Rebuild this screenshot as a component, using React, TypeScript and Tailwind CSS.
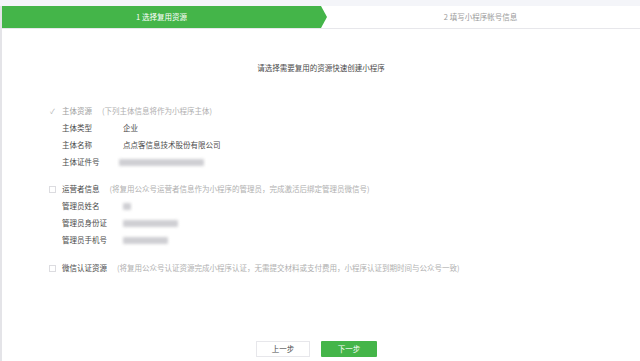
const font = { fontFamily: '"Noto Sans CJK SC", "Noto Sans", sans-serif' };

function Blur({ w }: { w: number }) {
  return (
    <div
      className="h-[7px] rounded-[1px] bg-[#cfcfd3] blur-[1.5px]"
      style={{ width: w }}
    />
  );
}

function Row({ label, children }: { label: string; children: React.ReactNode }) {
  return (
    <div className="flex h-[17px] items-center pl-[13px]">
      <div className="w-[61px] text-[#4a4a4a]">{label}</div>
      <div className="text-[#4a4a4a]">{children}</div>
    </div>
  );
}

function Heading({
  checked,
  title,
  note,
}: {
  checked?: boolean;
  title: string;
  note: string;
}) {
  return (
    <div className="flex h-[17px] items-center">
      {checked ? (
        <span className="flex w-[7px] items-center justify-center text-[7px] leading-none text-[#b5b5b5]">
          ✓
        </span>
      ) : (
        <span className="h-[7px] w-[7px] border border-[#dcdce0] bg-white" />
      )}
      <span
        className={`ml-[6px] ${checked ? "text-[#a0a0a0]" : "text-[#4a4a4a]"}`}
      >
        {title}
      </span>
      <span className="ml-[10px] text-[#b0b0b0]">{note}</span>
    </div>
  );
}

export default function App() {
  return (
    <div
      className="h-[361px] w-[640px] overflow-hidden bg-[#f4f5f9] pt-[6px] text-[7.5px] leading-none"
      style={font}
    >
      <div className="flex h-[355px] flex-col border-l-2 border-[#e4e4e8] bg-white">
        {/* steps */}
        <div className="flex h-[23px] border-b border-[#e7e7eb]">
          <div className="relative flex w-1/2 items-center justify-center bg-[#44b549] text-white">
            1 选择复用资源
            <span className="absolute -right-[6px] top-0 h-0 w-0 border-y-[11px] border-l-[6px] border-y-transparent border-l-[#44b549]" />
          </div>
          <div className="flex w-1/2 items-center justify-center text-[#9a9a9a]">
            2 填写小程序帐号信息
          </div>
        </div>

        <div className="mt-[35px] text-center text-[#4a4a4a]">
          请选择需要复用的资源快速创建小程序
        </div>

        <div className="mt-[31px] pl-[47px]">
          <Heading checked title="主体资源" note="(下列主体信息将作为小程序主体)" />
          <Row label="主体类型">企业</Row>
          <Row label="主体名称">点点客信息技术股份有限公司</Row>
          <Row label="主体证件号">
            <div className="-ml-[4px]">
              <Blur w={85} />
            </div>
          </Row>

          <div className="mt-[10px]">
            <Heading
              title="运营者信息"
              note="(将复用公众号运营者信息作为小程序的管理员，完成激活后绑定管理员微信号)"
            />
            <Row label="管理员姓名">
              <Blur w={8} />
            </Row>
            <Row label="管理员身份证">
              <Blur w={55} />
            </Row>
            <Row label="管理员手机号">
              <Blur w={45} />
            </Row>
          </div>

          <div className="mt-[11px]">
            <Heading
              title="微信认证资源"
              note="(将复用公众号认证资源完成小程序认证，无需提交材料或支付费用，小程序认证到期时间与公众号一致)"
            />
          </div>
        </div>

        <div className="mb-[4px] mt-auto flex justify-center gap-[11px] pr-[9px]">
          <button className="h-[16px] w-[54px] border border-[#e7e7eb] bg-white text-[#4a4a4a]">
            上一步
          </button>
          <button className="h-[16px] w-[56px] rounded-[1px] bg-[#44b549] text-white">
            下一步
          </button>
        </div>
      </div>
    </div>
  );
}
